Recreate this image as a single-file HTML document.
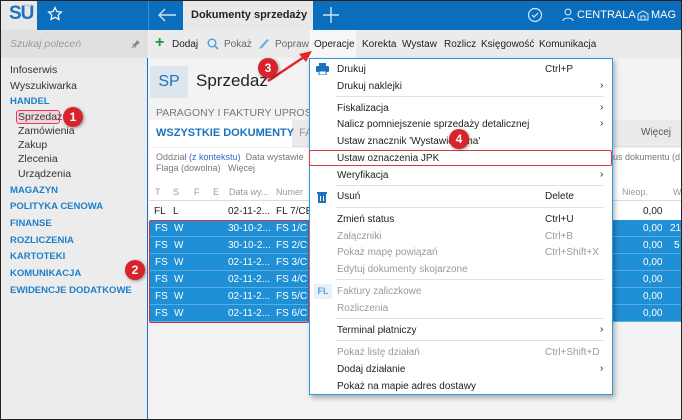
<!DOCTYPE html>
<html><head><meta charset="utf-8"><style>
*{margin:0;padding:0;box-sizing:border-box}
body{width:682px;height:420px;overflow:hidden;font-family:"Liberation Sans",sans-serif;font-size:10px;color:#222;background:#f3f3f3;position:relative}
.a{position:absolute;white-space:nowrap}
.blue{color:#1e7fc8}
.mi{position:absolute;left:337px;font-size:10px}
.sc{position:absolute;left:545px;font-size:10px}
.ar{position:absolute;left:600px;font-size:10px}
.dis{color:#9a9a9a}
.sep{position:absolute;left:336px;width:268px;height:1px;background:#e2e2e2}
.badge{position:absolute;width:20px;height:20px;border-radius:50%;background:#d9232a;color:#fff;font-size:12px;font-weight:bold;text-align:center;line-height:20px;box-shadow:1px 1px 3px rgba(0,0,0,.4)}
.row{position:absolute;left:150px;width:532px;height:17px;background:#1f8fd6;color:#fff;border-bottom:1px solid #58aee3;font-size:10px}
.row span{position:absolute;top:3px}
.sb{position:absolute;left:18px;font-size:10.5px;color:#333}
.sh{position:absolute;left:10px;font-size:9.5px;font-weight:bold;color:#1e7fc8}
</style></head><body>
<div class="a" style="left:0;top:0;width:682px;height:30px;background:#0b6ebd"></div>
<div class="a" style="left:0;top:0;width:37px;height:30px;background:#e8e8e8"></div>
<div class="a" style="left:9px;top:3px;font-size:19px;color:#1a72c0;font-weight:bold;letter-spacing:-1px">SU</div>
<div class="a" style="left:24px;top:3px;font-size:4px;color:#8ab">PRO</div>
<svg class="a" style="left:47px;top:6px" width="16" height="16" viewBox="0 0 16 16"><path d="M8 1.5l1.9 4.1 4.5.5-3.3 3 .9 4.4L8 11.3 4 13.5l.9-4.4-3.3-3 4.5-.5z" fill="none" stroke="#fff" stroke-width="1.2"/></svg>
<div class="a" style="left:148px;top:0;width:1px;height:30px;background:#3a8fd0"></div>
<svg class="a" style="left:157px;top:7px" width="20" height="16"><path d="M19 8H2M8 2L2 8l6 6" fill="none" stroke="#cfe3f5" stroke-width="1.4"/></svg>
<div class="a" style="left:183px;top:0;width:130px;height:30px;background:#e8e8e8"></div>
<div class="a" style="left:191px;top:9px;font-size:11px;font-weight:bold;color:#222">Dokumenty sprzedaży</div>
<svg class="a" style="left:323px;top:7px" width="16" height="16"><path d="M8 0v16M0 8h16" stroke="#cfe3f5" stroke-width="1.4"/></svg>
<svg class="a" style="left:527px;top:7px" width="16" height="16"><circle cx="8" cy="8" r="6.5" fill="none" stroke="#dbe9f6" stroke-width="1.2"/><path d="M5 8l2 2 4-4" fill="none" stroke="#dbe9f6" stroke-width="1.2"/></svg>
<svg class="a" style="left:562px;top:8px" width="12" height="14"><circle cx="6" cy="4" r="3" fill="none" stroke="#dbe9f6"/><path d="M1 13c0-4 10-4 10 0" fill="none" stroke="#dbe9f6"/></svg>
<div class="a" style="left:577px;top:9px;font-size:11px;color:#fff">CENTRALA</div>
<svg class="a" style="left:637px;top:9px" width="12" height="12"><path d="M1 11V5l5-3 5 3v6zM4 11V7h4v4" fill="none" stroke="#dbe9f6"/></svg>
<div class="a" style="left:651px;top:9px;font-size:11px;color:#fff">MAG</div>

<div class="a" style="left:0;top:30px;width:148px;height:390px;background:#ececec;border-right:1px solid #1a72c0"></div>
<div class="a" style="left:0;top:30px;width:148px;height:28px;background:#e0e0e0"></div>
<div class="a" style="left:10px;top:38px;font-style:italic;color:#9a9a9a;font-size:10.5px">Szukaj poleceń</div>
<svg class="a" style="left:131px;top:39px" width="10" height="10"><path d="M6 1l3 3-2 1-2 2v2L1 5h2l2-2z" fill="#888"/><path d="M3 7L1 9" stroke="#888"/></svg>
<div class="a" style="left:10px;top:64px;font-size:10.5px;color:#333">Infoserwis</div>
<div class="a" style="left:10px;top:80px;font-size:10.5px;color:#333">Wyszukiwarka</div>
<div class="sh" style="top:96px">HANDEL</div>
<div class="sb" style="top:111px">Sprzedaż</div>
<div class="sb" style="top:125px">Zamówienia</div>
<div class="sb" style="top:139px">Zakup</div>
<div class="sb" style="top:153px">Zlecenia</div>
<div class="sb" style="top:168px">Urządzenia</div>
<div class="a" style="left:16px;top:110px;width:44px;height:14px;border:1px solid #e36;border-radius:3px;background:rgba(230,80,80,.12)"></div>
<div class="sh" style="top:185px">MAGAZYN</div>
<div class="sh" style="top:201px">POLITYKA CENOWA</div>
<div class="sh" style="top:218px">FINANSE</div>
<div class="sh" style="top:235px">ROZLICZENIA</div>
<div class="sh" style="top:251px">KARTOTEKI</div>
<div class="sh" style="top:268px">KOMUNIKACJA</div>
<div class="sh" style="top:285px">EWIDENCJE DODATKOWE</div>

<div class="a" style="left:149px;top:30px;width:533px;height:28px;background:#ebebeb"></div>
<div class="a" style="left:155px;top:36px;font-size:16px;font-weight:bold;color:#1a9a3a;line-height:14px">+</div>
<div class="a" style="left:172px;top:39px">Dodaj</div>
<svg class="a" style="left:207px;top:38px" width="12" height="12"><circle cx="5" cy="5" r="3.8" fill="none" stroke="#4aa0d8" stroke-width="1.4"/><path d="M8 8l3 3" stroke="#4aa0d8" stroke-width="1.6"/></svg>
<div class="a" style="left:224px;top:39px;color:#666">Pokaż</div>
<svg class="a" style="left:258px;top:38px" width="12" height="12"><path d="M1 11l3-1 7-8-2-1-7 8z" fill="#6aaee0"/></svg>
<div class="a" style="left:275px;top:39px;color:#666">Popraw</div>
<div class="a" style="left:310px;top:30px;width:46px;height:28px;background:#f7f7f7"></div>
<div class="a" style="left:314px;top:39px">Operacje</div>
<div class="a" style="left:362px;top:39px">Korekta</div>
<div class="a" style="left:402px;top:39px">Wystaw</div>
<div class="a" style="left:444px;top:39px">Rozlicz</div>
<div class="a" style="left:481px;top:39px">Księgowość</div>
<div class="a" style="left:539px;top:39px">Komunikacja</div>

<div class="a" style="left:150px;top:66px;width:38px;height:32px;background:#dde6ee;color:#1a72c0;font-size:16px;text-align:center;line-height:32px">SP</div>
<div class="a" style="left:196px;top:71px;font-size:17px;color:#222">Sprzedaż</div>
<div class="a" style="left:156px;top:107px;font-size:10.5px;color:#777">PARAGONY I FAKTURY UPROSZ</div>
<div class="a" style="left:149px;top:120px;width:533px;height:27px;background:#eaeaea;border-bottom:1px solid #ddd"></div>
<div class="a" style="left:149px;top:120px;width:143px;height:27px;background:#fff"></div>
<div class="a" style="left:156px;top:127px;font-size:11px;font-weight:bold;color:#1a72c0">WSZYSTKIE DOKUMENTY</div>
<div class="a" style="left:299px;top:127px;font-size:11px;color:#999">FA</div>
<div class="a" style="left:641px;top:127px;font-size:10px;color:#555">Więcej</div>
<div class="a" style="left:149px;top:148px;width:533px;height:170px;background:#fff"></div>
<div class="a" style="left:156px;top:152px;font-size:9px;color:#777">Oddział <span style="color:#3366cc">(z kontekstu)</span>&nbsp; Data wystawie</div>
<div class="a" style="left:156px;top:163px;font-size:9px;color:#777">Flaga (dowolna)&nbsp;&nbsp; Więcej</div>
<div class="a" style="left:613px;top:152px;font-size:9px;color:#777">us dokumentu (d</div>
<div class="a" style="left:149px;top:182px;width:533px;height:19px;border-bottom:1px solid #ddd"></div>
<div class="a" style="left:155px;top:187px;font-size:9px;color:#999">T</div>
<div class="a" style="left:173px;top:187px;font-size:9px;color:#999">S</div>
<div class="a" style="left:194px;top:187px;font-size:9px;color:#999">F</div>
<div class="a" style="left:213px;top:187px;font-size:9px;color:#999">E</div>
<div class="a" style="left:229px;top:187px;font-size:9px;color:#999">Data wy...</div>
<div class="a" style="left:276px;top:187px;font-size:9px;color:#999">Numer</div>
<div class="a" style="left:622px;top:187px;font-size:9px;color:#999">Nieop.</div>
<div class="a" style="left:673px;top:187px;font-size:9px;color:#999">W</div>
<div class="a" style="left:154px;top:206px">FL</div>
<div class="a" style="left:173px;top:206px">L</div>
<div class="a" style="left:228px;top:206px">02-11-2...</div>
<div class="a" style="left:276px;top:206px">FL 7/CEN</div>
<div class="a" style="left:643px;top:206px">0,00</div>

<div class="row" style="top:220px"><span style="left:5px">FS</span><span style="left:24px">W</span><span style="left:78px">30-10-2...</span><span style="left:126px">FS 1/CEN</span><span style="left:493px">0,00</span><span style="left:520px">21</span></div>
<div class="row" style="top:237px"><span style="left:5px">FS</span><span style="left:24px">W</span><span style="left:78px">30-10-2...</span><span style="left:126px">FS 2/CEN</span><span style="left:493px">0,00</span><span style="left:524px">5</span></div>
<div class="row" style="top:254px"><span style="left:5px">FS</span><span style="left:24px">W</span><span style="left:78px">02-11-2...</span><span style="left:126px">FS 3/CEN</span><span style="left:493px">0,00</span></div>
<div class="row" style="top:271px"><span style="left:5px">FS</span><span style="left:24px">W</span><span style="left:78px">02-11-2...</span><span style="left:126px">FS 4/CEN</span><span style="left:493px">0,00</span></div>
<div class="row" style="top:288px"><span style="left:5px">FS</span><span style="left:24px">W</span><span style="left:78px">02-11-2...</span><span style="left:126px">FS 5/CEN</span><span style="left:493px">0,00</span></div>
<div class="row" style="top:305px"><span style="left:5px">FS</span><span style="left:24px">W</span><span style="left:78px">02-11-2...</span><span style="left:126px">FS 6/CEN</span><span style="left:493px">0,00</span></div>
<div class="a" style="left:149px;top:220px;width:160px;height:103px;border:1.5px solid #e03040;border-radius:2px"></div>

<div class="a" style="left:309px;top:58px;width:304px;height:337px;background:#fff;border:1px solid #2a9be0;box-shadow:2px 3px 5px rgba(0,0,0,.3)"></div>
<svg class="a" style="left:316px;top:63px" width="13" height="12"><rect x="3" y="0" width="7" height="3" fill="#1a72c0"/><rect x="0" y="3" width="13" height="6" rx="1" fill="#1a72c0"/><rect x="3" y="8" width="7" height="4" fill="#fff" stroke="#1a72c0"/></svg>
<div class="mi" style="top:64px">Drukuj</div><div class="sc" style="top:64px">Ctrl+P</div>
<div class="mi" style="top:81px">Drukuj naklejki</div><div class="ar" style="top:80px">›</div>
<div class="sep" style="top:96px"></div>
<div class="mi" style="top:103px">Fiskalizacja</div><div class="ar" style="top:102px">›</div>
<div class="mi" style="top:119px">Nalicz pomniejszenie sprzedaży detalicznej</div><div class="ar" style="top:118px">›</div>
<div class="mi" style="top:136px">Ustaw znacznik 'Wystawiony na'</div>
<div class="mi" style="top:153px">Ustaw oznaczenia JPK</div>
<div class="a" style="left:309px;top:150px;width:303px;height:16px;border:1.5px solid #d83a48;border-radius:2px"></div>
<div class="mi" style="top:170px">Weryfikacja</div><div class="ar" style="top:169px">›</div>
<div class="sep" style="top:185px"></div>
<svg class="a" style="left:317px;top:191px" width="10" height="12"><rect x="0" y="1" width="10" height="2" fill="#1a72c0"/><rect x="1" y="3" width="8" height="9" fill="#1a72c0"/><path d="M3.5 5v5M6.5 5v5" stroke="#fff"/></svg>
<div class="mi" style="top:191px">Usuń</div><div class="sc" style="top:191px">Delete</div>
<div class="sep" style="top:207px"></div>
<div class="mi" style="top:214px">Zmień status</div><div class="sc" style="top:214px">Ctrl+U</div>
<div class="mi dis" style="top:231px">Załączniki</div><div class="sc dis" style="top:231px">Ctrl+B</div>
<div class="mi dis" style="top:247px">Pokaż mapę powiązań</div><div class="sc dis" style="top:247px">Ctrl+Shift+X</div>
<div class="mi dis" style="top:264px">Edytuj dokumenty skojarzone</div>
<div class="sep" style="top:279px"></div>
<div class="a" style="left:314px;top:284px;width:18px;height:15px;background:#e8f1f9;color:#5aa0d8;font-size:9px;font-weight:bold;text-align:center;line-height:15px">FL</div>
<div class="mi dis" style="top:286px">Faktury zaliczkowe</div>
<div class="mi dis" style="top:303px">Rozliczenia</div>
<div class="sep" style="top:318px"></div>
<div class="mi" style="top:325px">Terminal płatniczy</div><div class="ar" style="top:324px">›</div>
<div class="sep" style="top:340px"></div>
<div class="mi dis" style="top:347px">Pokaż listę działań</div><div class="sc dis" style="top:347px">Ctrl+Shift+D</div>
<div class="mi" style="top:364px">Dodaj działanie</div><div class="ar" style="top:363px">›</div>
<div class="mi" style="top:381px">Pokaż na mapie adres dostawy</div>

<svg class="a" style="left:260px;top:45px" width="60" height="40"><path d="M8 36L47 10" stroke="#e8242c" stroke-width="2.5"/><path d="M52 6L39 9l7 8z" fill="#e8242c"/></svg>
<div class="badge" style="left:63px;top:107px">1</div>
<div class="badge" style="left:125px;top:260px">2</div>
<div class="badge" style="left:258px;top:58px">3</div>
<div class="badge" style="left:449px;top:129px">4</div>
<div class="a" style="left:0;top:0;width:682px;height:420px;border:1px solid #222"></div>
</body></html>
